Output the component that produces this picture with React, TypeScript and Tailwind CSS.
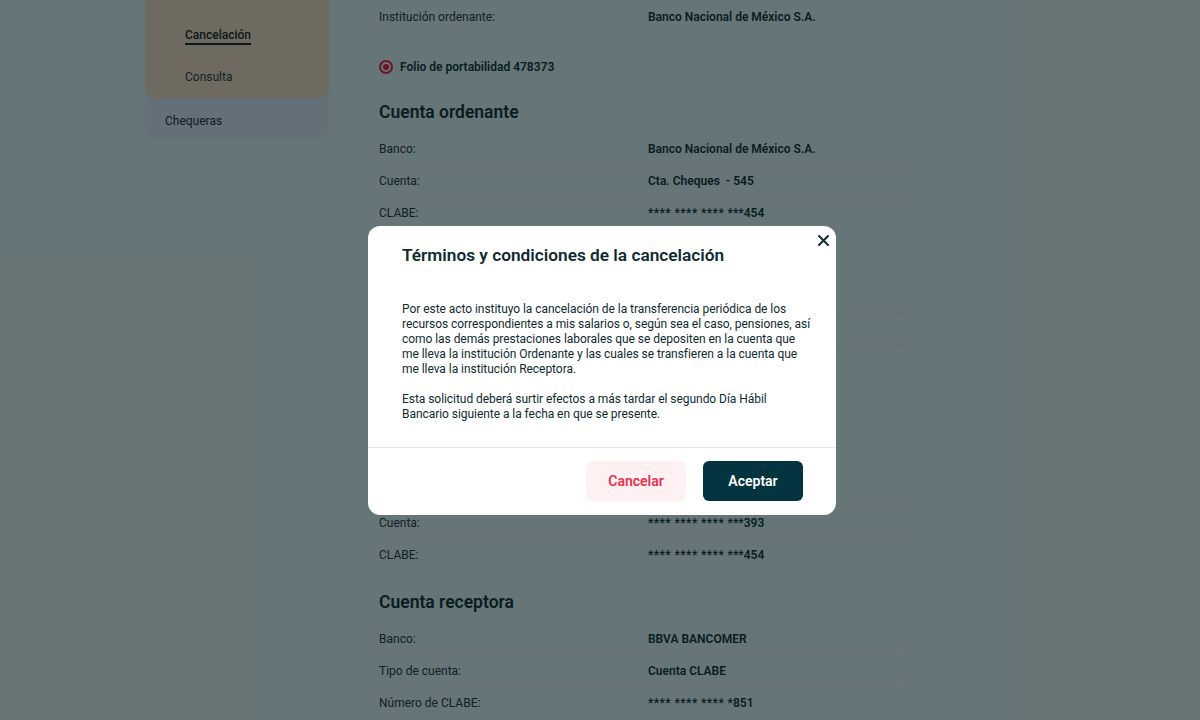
import React from "react";

type Row = { label: string; value: React.ReactNode };

const Stars = ({ tail }: { tail: string }) => (
  <span>
    <span className="tracking-[0.4px]">**** **** **** </span>
    {tail}
  </span>
);

function Rows({ rows }: { rows: Row[] }) {
  return (
    <div>
      {rows.map((r, i) => (
        <div
          key={i}
          className={
            "flex h-[32px] items-center text-[12px] " +
            (i < rows.length - 1 ? "border-b border-[#d9dfe0]" : "")
          }
        >
          <div className="w-[269px] text-[#24434a]">{r.label}</div>
          <div className="font-semibold text-[#123c44]">{r.value}</div>
        </div>
      ))}
    </div>
  );
}

function Heading({ children }: { children: React.ReactNode }) {
  return (
    <h2 className="h-[24px] flex items-center text-[17.5px] font-semibold text-[#123c44] mb-[9px]">{children}</h2>
  );
}

function Folio({ n, checked, h }: { n: string; checked?: boolean; h: string }) {
  return (
    <div className={"flex items-center " + h}>
      <div className="flex items-center gap-[7px]">
        <span className="w-[14px] h-[14px] rounded-full border-2 border-[#e0264d] flex items-center justify-center">
          {checked && <span className="w-[6px] h-[6px] rounded-full bg-[#e0264d]" />}
        </span>
        <span className="text-[12px] font-semibold text-[#123c44]">Folio de portabilidad {n}</span>
      </div>
    </div>
  );
}

export default function App() {
  return (
    <div
      className="relative w-[1200px] h-[720px] overflow-hidden bg-[#cdeaee]"
      style={{ fontFamily: "Roboto, 'Liberation Sans', sans-serif" }}
    >
      <div className="flex">
        <aside className="ml-[145px] w-[184px] shrink-0">
          <div className="rounded-b-[12px] bg-[#c8dff0]">
            <div className="rounded-b-[12px] bg-[#dcd5bf] pt-[14px]">
              <div className="h-[42px] flex items-center pl-[40px]">
                <span className="text-[12px] font-medium text-[#16333a] underline underline-offset-[4px] decoration-[1.5px]">
                  Cancelación
                </span>
              </div>
              <div className="h-[42px] flex items-center pl-[40px]">
                <span className="text-[12px] text-[#24434a]">Consulta</span>
              </div>
            </div>
            <div className="pl-[20px] pt-[15px] pb-[10px] leading-[16px] text-[12px] text-[#1c3a48]">Chequeras</div>
          </div>
        </aside>

        <main className="ml-[50px] w-[524px] pt-[1px]">
          <Rows rows={[{ label: "Institución ordenante:", value: "Banco Nacional de México S.A." }]} />
          <Folio n="478373" checked h="h-[67px]" />
          <section>
            <Heading>Cuenta ordenante</Heading>
            <Rows
              rows={[
                { label: "Banco:", value: "Banco Nacional de México S.A." },
                { label: "Cuenta:", value: "Cta. Cheques\u00a0 - 545" },
                { label: "CLABE:", value: <Stars tail="***454" /> },
              ]}
            />
          </section>
          <section className="mt-[19px]">
            <Heading>Cuenta receptora</Heading>
            <Rows
              rows={[
                { label: "Banco:", value: "BBVA BANCOMER" },
                { label: "Número de CLABE:", value: <Stars tail="*851" /> },
                { label: "Institución ordenante:", value: "Banco Nacional de México S.A." },
              ]}
            />
          </section>
          <Folio n="478374" h="h-[65px]" />
          <section>
            <Heading>Cuenta ordenante</Heading>
            <Rows
              rows={[
                { label: "Banco:", value: "Banco Nacional de México S.A." },
                { label: "Cuenta:", value: <Stars tail="***393" /> },
                { label: "CLABE:", value: <Stars tail="***454" /> },
              ]}
            />
          </section>
          <section className="mt-[19px]">
            <Heading>Cuenta receptora</Heading>
            <Rows
              rows={[
                { label: "Banco:", value: "BBVA BANCOMER" },
                { label: "Tipo de cuenta:", value: "Cuenta CLABE" },
                { label: "Número de CLABE:", value: <Stars tail="*851" /> },
              ]}
            />
          </section>
        </main>
      </div>

      {/* overlay */}
      <div className="absolute inset-0 bg-black/50" />

      {/* modal */}
      <div className="absolute left-[368px] top-[226px] w-[468px] rounded-[12px] bg-white text-[#0f2b31]">
        <button className="absolute right-[3px] top-[4px] w-[20px] h-[20px] flex items-center justify-center">
          <svg width="11" height="11" viewBox="0 0 11 11" fill="none">
            <path d="M1 1 L10 10 M10 1 L1 10" stroke="#0f2b31" strokeWidth="2" strokeLinecap="round" />
          </svg>
        </button>
        <div className="px-[34px] pt-[18px] pb-[25px]">
          <h3 className="h-[24px] flex items-center text-[17.25px] font-semibold whitespace-nowrap">
            Términos y condiciones de la cancelación
          </h3>
          <div className="mt-[34px] text-[12px] leading-[15px] whitespace-nowrap tracking-[-0.05px]">
            <p>
              Por este acto instituyo la cancelación de la transferencia periódica de los
              <br />
              recursos correspondientes a mis salarios o, según sea el caso, pensiones, así
              <br />
              como las demás prestaciones laborales que se depositen en la cuenta que
              <br />
              me lleva la institución Ordenante y las cuales se transfieren a la cuenta que
              <br />
              me lleva la institución Receptora.
            </p>
            <p className="mt-[15px]">
              Esta solicitud deberá surtir efectos a más tardar el segundo Día Hábil
              <br />
              Bancario siguiente a la fecha en que se presente.
            </p>
          </div>
        </div>
        <div className="border-t border-[#e3e8ea] flex justify-end gap-[17px] pr-[33px] pt-[13px] pb-[14px]">
          <button className="w-[100px] h-[40px] rounded-[6px] bg-[#fff1f1] text-[#e8304f] text-[14px] font-semibold">
            Cancelar
          </button>
          <button className="w-[100px] h-[40px] rounded-[6px] bg-[#053441] text-white text-[14px] font-semibold">
            Aceptar
          </button>
        </div>
      </div>
    </div>
  );
}
